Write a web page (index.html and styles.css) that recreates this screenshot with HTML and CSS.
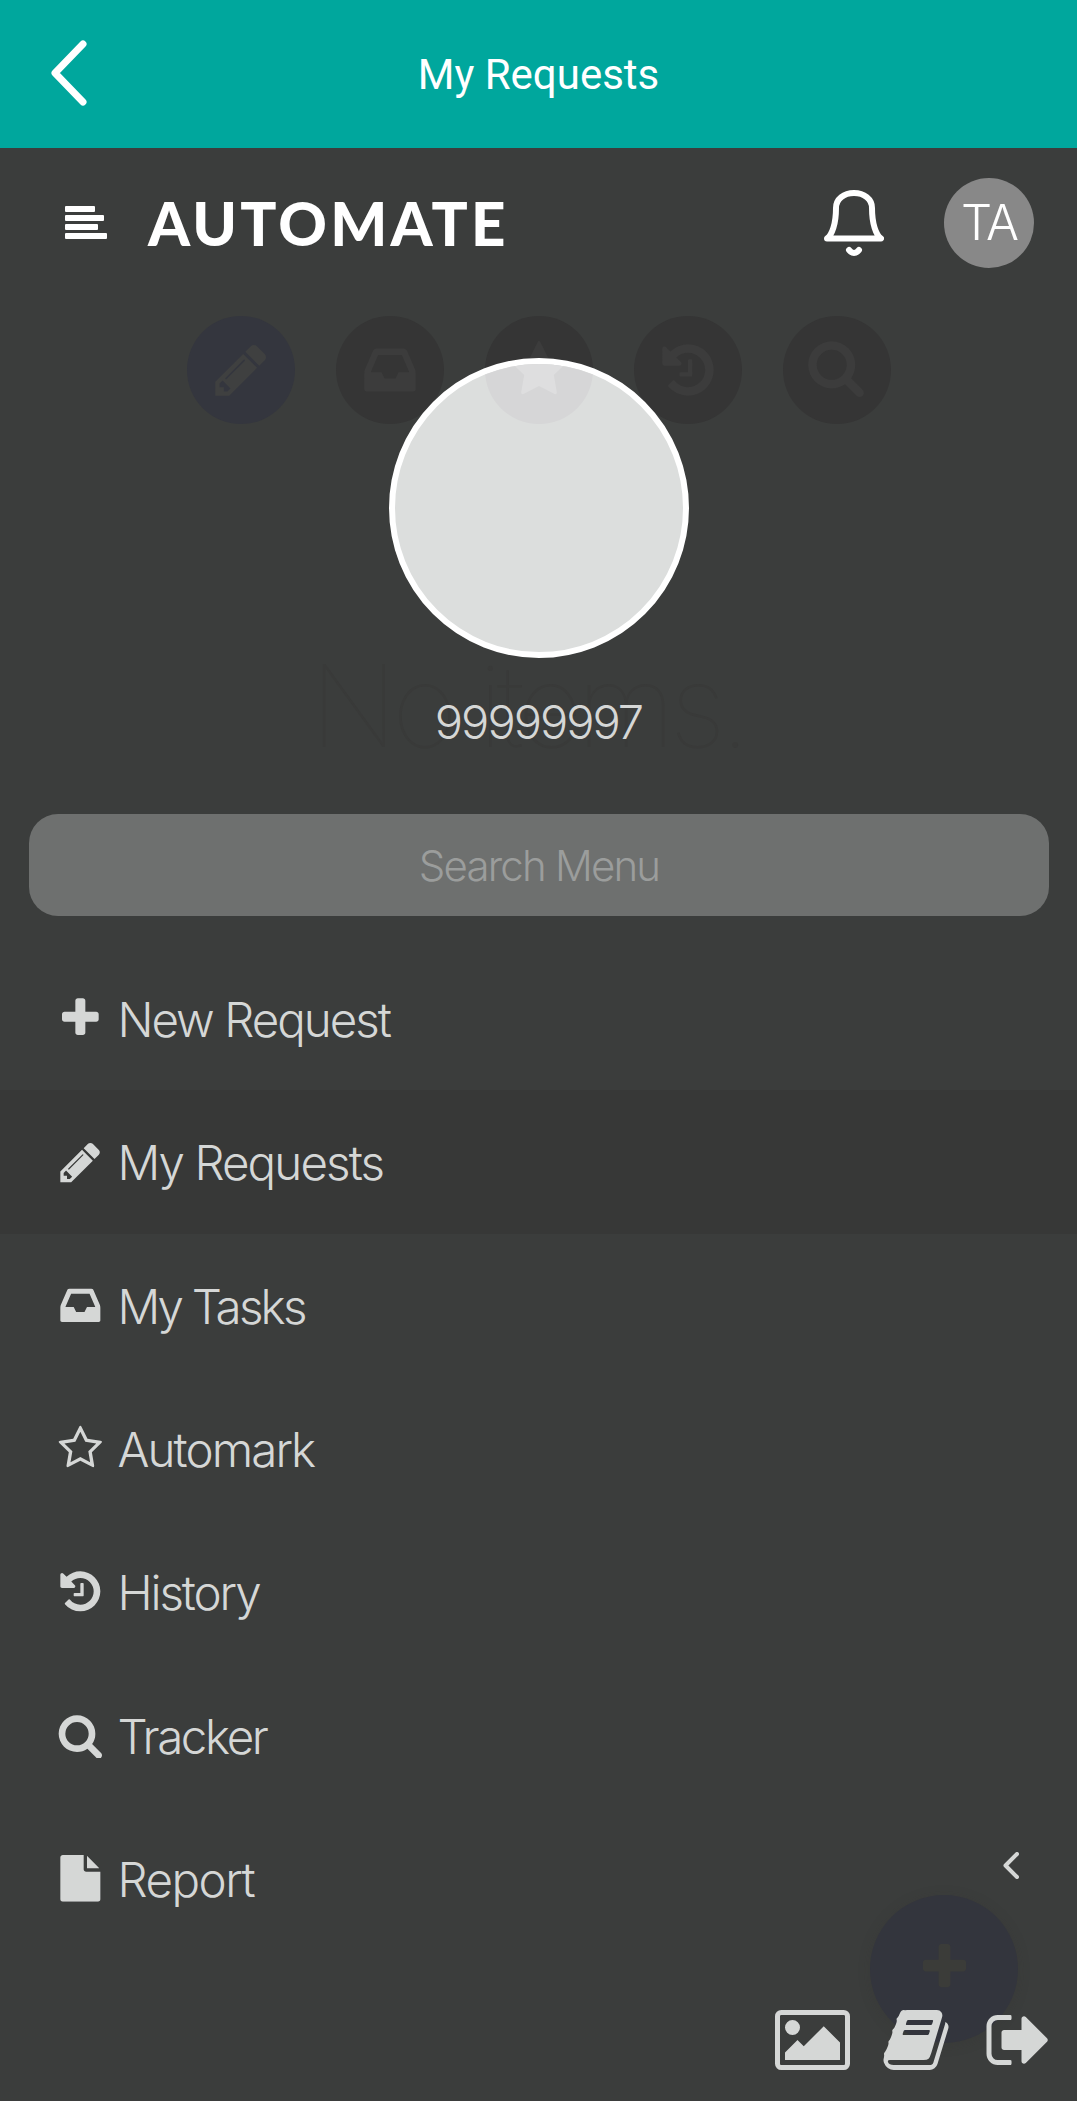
FILE: index.html
```html
<!DOCTYPE html>
<html lang="en">
<head>
<meta charset="utf-8">
<title>My Requests</title>
<link rel="stylesheet" href="styles.css">
</head>
<body>
<svg class="defs" aria-hidden="true">
  <symbol id="plus" viewBox="0 0 1792 1792"><path d="M1600 736v192q0 40-28 68t-68 28h-416v416q0 40-28 68t-68 28h-192q-40 0-68-28t-28-68v-416h-416q-40 0-68-28t-28-68v-192q0-40 28-68t68-28h416v-416q0-40 28-68t68-28h192q40 0 68 28t28 68v416h416q40 0 68 28t28 68z"/></symbol>
  <symbol id="pencil" viewBox="0 0 1792 1792"><path d="M491 1536l91-91-235-235-91 91v107h128v128h107zm523-928q0-22-22-22-10 0-17 7l-542 542q-7 7-7 17 0 22 22 22 10 0 17-7l542-542q7-7 7-17zm-54-192l416 416-832 832h-416v-416zm683 96q0 53-37 90l-166 166-416-416 166-165q36-38 90-38 53 0 91 38l235 234q37 39 37 91z"/></symbol>
  <symbol id="inbox" viewBox="0 0 1792 1792"><path d="M1151 960h316q-1-3-2.500-8t-2.500-8l-212-496h-708l-212 496q-1 2-2.500 8t-2.500 8h316l95 192h320zm513 30v482q0 26-19 45t-45 19h-1408q-26 0-45-19t-19-45v-482q0-62 25-123l238-552q10-25 36.500-42t52.500-17h832q26 0 52.500 17t36.500 42l238 552q25 61 25 123z"/></symbol>
  <symbol id="star" viewBox="0 0 1792 1792"><path d="M1728 647q0 22-26 48l-363 354 86 500q1 7 1 20 0 21-10.500 35.500t-30.500 14.500q-19 0-40-12l-449-236-449 236q-22 12-40 12-21 0-31.500-14.500t-10.500-35.500q0-6 2-20l86-500-364-354q-25-27-25-48 0-37 56-46l502-73 225-455q19-41 49-41t49 41l225 455 502 73q56 9 56 46z"/></symbol>
  <symbol id="star-o" viewBox="0 0 1792 1792"><path d="M1201 1004l306-297-422-62-189-382-189 382-422 62 306 297-73 421 378-199 377 199zm527-357q0 22-26 48l-363 354 86 500q1 7 1 20 0 50-41 50-19 0-40-12l-449-236-449 236q-22 12-40 12-21 0-31.500-14.500t-10.500-35.500q0-6 2-20l86-500-364-354q-25-27-25-48 0-37 56-46l502-73 225-455q19-41 49-41t49 41l225 455 502 73q56 9 56 46z"/></symbol>
  <symbol id="history" viewBox="0 0 1792 1792"><path d="M1664 896q0 156-61 298t-164 245-245 164-298 61q-172 0-327-72.500t-264-204.500q-7-10-6.500-22.500t8.500-20.500l137-138q10-9 25-9 16 2 23 12 73 95 179 147t225 52q104 0 198.500-40.500t163.500-109.500 109.500-163.500 40.500-198.500-40.500-198.500-109.500-163.500-163.500-109.500-198.500-40.500q-98 0-188 35.500t-160 101.500l137 138q31 30 14 69-17 40-59 40h-448q-26 0-45-19t-19-45v-448q0-42 40-59 39-17 69 14l130 129q107-101 244.500-156.500t284.500-55.500q156 0 298 61t245 164 164 245 61 298zm-640-288v448q0 14-9 23t-23 9h-320q-14 0-23-9t-9-23v-64q0-14 9-23t23-9h224v-352q0-14 9-23t23-9h64q14 0 23 9t9 23z"/></symbol>
  <symbol id="search" viewBox="0 0 1792 1792"><path d="M1216 832q0-185-131.500-316.500t-316.500-131.500-316.500 131.500-131.500 316.500 131.500 316.500 316.500 131.500 316.500-131.500 131.500-316.500zm512 832q0 52-38 90t-90 38q-54 0-90-38l-343-342q-179 124-399 124-143 0-273.500-55.500t-225-150-150-225-55.500-273.500 55.500-273.500 150-225 225-150 273.500-55.500 273.500 55.500 225 150 150 225 55.500 273.500q0 220-124 399l343 343q37 37 37 90z"/></symbol>
  <symbol id="file" viewBox="0 0 1792 1792"><path d="M1152 512v-472q22 14 36 28l408 408q14 14 28 36h-472zm-128 32q0 40 28 68t68 28h544v1056q0 40-28 68t-68 28h-1344q-40 0-68-28t-28-68v-1600q0-40 28-68t68-28h800v544z"/></symbol>
  <symbol id="picture" viewBox="64 0 1920 1792"><path d="M704 576q0 80-56 136t-136 56-136-56-56-136 56-136 136-56 136 56 56 136zm1024 384v448h-1408v-192l320-320 160 160 512-512zm96-704h-1600q-13 0-22.500 9.500t-9.500 22.500v1216q0 13 9.500 22.500t22.500 9.500h1600q13 0 22.500-9.500t9.500-22.500v-1216q0-13-9.500-22.500t-22.500-9.500zm160 32v1216q0 66-47 113t-113 47h-1600q-66 0-113-47t-47-113v-1216q0-66 47-113t113-47h1600q66 0 113 47t47 113z"/></symbol>
  <symbol id="book" viewBox="0 0 1792 1792"><path d="M1703 478q40 57 18 129l-275 906q-19 64-76.500 107.500t-122.500 43.500h-923q-77 0-148.500-53.500t-99.500-131.500q-24-67-2-127 0-4 3-27t4-37q1-8-3-21.500t-3-19.500q2-11 8-21t16.500-23.500 16.500-23.500q23-38 45-91.500t30-91.500q3-10 .5-30t-.5-28q3-11 17-28t17-23q21-36 42-92t25-90q1-9-2.500-32t.5-28q4-13 22-30.500t22-22.500q19-26 42.500-84.500t27.500-96.500q1-8-3-25.500t-2-26.500q2-8 9-18t18-23 17-21q8-12 16.500-30.500t15-35 16-36 19.500-32 26.500-23.500 36-11.500 47.500 5.500l-1 3q38-9 51-9h761q74 0 114 56t18 130l-274 906q-36 119-71.500 153.500t-128.500 34.500h-869q-27 0-38 15-11 16-1 43 24 70 144 70h923q29 0 56-15.500t35-41.500l300-987q7-22 5-57 38 15 59 43zm-1064 2q-4 13 2 22.500t20 9.500h608q13 0 25.500-9.500t16.500-22.500l21-64q4-13-2-22.500t-20-9.500h-608q-13 0-25.500 9.500t-16.500 22.500zm-83 256q-4 13 2 22.500t20 9.500h608q13 0 25.500-9.500t16.500-22.500l21-64q4-13-2-22.500t-20-9.500h-608q-13 0-25.500 9.500t-16.500 22.500z"/></symbol>
  <symbol id="sign-out" viewBox="0 0 1792 1792"><path d="M704 1440q0 4 1 20t.5 26.500-3 23.500-10 19.500-20.500 6.500h-320q-119 0-203.500-84.500t-84.500-203.500v-704q0-119 84.500-203.500t203.500-84.500h320q13 0 22.500 9.500t9.500 22.500q0 4 1 20t.5 26.500-3 23.500-10 19.500-20.500 6.500h-320q-66 0-113 47t-47 113v704q0 66 47 113t113 47h312l11.500 1 11.500 3 8 5.500 7 9 2 13.500zm928-544q0 26-19 45l-544 544q-19 19-45 19t-45-19-19-45v-288h-448q-26 0-45-19t-19-45v-384q0-26 19-45t45-19h448v-288q0-26 19-45t45-19 45 19l544 544q19 19 19 45z"/></symbol>
</svg>

<header class="titlebar">
  <svg class="back" viewBox="0 0 36 66"><path d="M32 4L4 33L32 62"/></svg>
  <h1 class="title">My Requests</h1>
</header>

<main class="screen">
  <div class="backdrop">
    <div class="tabs">
      <span class="tab tab-on"><svg><use href="#pencil"/></svg></span>
      <span class="tab"><svg><use href="#inbox"/></svg></span>
      <span class="tab"><svg><use href="#star"/></svg></span>
      <span class="tab"><svg><use href="#history"/></svg></span>
      <span class="tab"><svg><use href="#search"/></svg></span>
    </div>
    <p class="empty">No items.</p>
    <span class="fab"><svg><use href="#plus"/></svg></span>
  </div>

  <div class="drawer">
    <div class="brandbar">
      <svg class="burger" viewBox="0 0 42 33"><rect width="30" height="6" rx="1"/><rect y="9" width="39" height="6" rx="1"/><rect y="18" width="33" height="6" rx="1"/><rect y="27" width="42" height="6" rx="1"/></svg>
      <span class="brand">AUTOMATE</span>
      <svg class="bell" viewBox="0 0 60 66"><path d="M3 48.500C8 45 12 34 12 18C12 9 20 3 30 3C40 3 48 9 48 18C48 34 52 45 57 48.500Z"/><path d="M25 60q5 6 10 0"/></svg>
      <span class="initials">TA</span>
    </div>

    <div class="profile">
      <div class="photo"><span class="photo-tab"><svg><use href="#star"/></svg></span></div>
      <p class="user">99999997</p>
    </div>

    <div class="searchbox"><span class="hint">Search Menu</span></div>

    <nav class="menu">
      <a class="item"><svg class="icon"><use href="#plus"/></svg><span class="label new">New Request</span></a>
      <a class="item active"><svg class="icon"><use href="#pencil"/></svg><span class="label requests">My Requests</span></a>
      <a class="item"><svg class="icon"><use href="#inbox"/></svg><span class="label tasks">My Tasks</span></a>
      <a class="item"><svg class="icon"><use href="#star-o"/></svg><span class="label automark">Automark</span></a>
      <a class="item"><svg class="icon"><use href="#history"/></svg><span class="label history">History</span></a>
      <a class="item"><svg class="icon"><use href="#search"/></svg><span class="label tracker">Tracker</span></a>
      <a class="item"><svg class="icon"><use href="#file"/></svg><span class="label report">Report</span><svg class="more" viewBox="0 0 16 27"><path d="M14 2L2.500 13.500L14 25"/></svg></a>
    </nav>

    <footer class="tools">
      <svg class="tool wide"><use href="#picture"/></svg>
      <svg class="tool"><use href="#book"/></svg>
      <svg class="tool"><use href="#sign-out"/></svg>
    </footer>
  </div>
</main>
</body>
</html>
```
FILE: styles.css
```css
* { box-sizing: border-box; }
body {
  margin: 0;
  width: 1077px;
  height: 2101px;
  overflow: hidden;
  background: #3b3d3c;
  color: #d5d7d6;
  font-family: Inter, "Liberation Sans", sans-serif;
  font-weight: 300;
}
h1, p { margin: 0; font-weight: inherit; }
svg { display: block; fill: currentColor; flex: none; }
.defs { position: absolute; width: 0; height: 0; }

.titlebar {
  display: grid;
  grid-template-columns: 86px 1fr 86px;
  align-items: center;
  height: 148px;
  background: #00a79d;
  color: #fff;
}
.back { width: 36px; height: 66px; margin: -3px 0 0 51px; fill: none; stroke: #fff; stroke-width: 7; stroke-linecap: round; stroke-linejoin: round; }
.title { padding-top: 2px; text-align: center; font: 400 42px/50px Roboto, sans-serif; }

.screen { position: relative; height: 1953px; }
.backdrop { position: absolute; inset: 0; }
.tabs { display: flex; justify-content: center; gap: 41px; padding: 168px 0 0 1px; }
.tab, .photo-tab { display: flex; align-items: center; justify-content: center; width: 108px; height: 108px; border-radius: 50%; background: #353535; color: #3c3c3c; }
.tab-on { background: #34363e; color: #3f4040; }
.tab svg, .photo-tab svg { width: 60px; height: 60px; }
.tab:last-child svg { margin: -6px 0 0 -3px; }
.empty { position: absolute; left: 310px; top: 488px; font-size: 114px; line-height: 140px; font-weight: 100; letter-spacing: -6px; color: #393a39; white-space: nowrap; }
.fab { position: absolute; left: 870px; top: 1747px; display: flex; align-items: center; justify-content: center; width: 148px; height: 148px; border-radius: 50%; background: #33353d; color: #3b3c39; box-shadow: 0 2px 12px rgba(50, 52, 48, .25); }
.fab svg { width: 55px; height: 55px; margin-bottom: 4px; }

.drawer { position: relative; display: flex; flex-direction: column; height: 100%; }
.brandbar { display: flex; align-items: center; height: 150px; padding: 0 43px 0 65px; color: #fff; }
.burger { width: 42px; height: 33px; margin-top: -2px; }
.brand { margin-left: 41px; font: 900 60px/72px Lato, sans-serif; letter-spacing: 3.200px; }
.bell { width: 60px; height: 66px; margin-left: auto; fill: none; stroke: #fff; stroke-width: 6; stroke-linecap: round; stroke-linejoin: round; }
.initials { width: 90px; height: 90px; margin-left: 60px; border-radius: 50%; background: #888; text-align: center; font-size: 49px; line-height: 90px; letter-spacing: -2px; }

.profile { display: flex; flex-direction: column; align-items: center; margin-top: 60px; }
.photo { position: relative; width: 300px; height: 300px; border: 6px solid #fff; border-radius: 50%; background: #dcdedd; overflow: hidden; }
.photo-tab { position: absolute; left: 90px; top: -48px; background: #d6d6d7; color: #dededf; }
.user { margin-top: 34px; font-size: 47px; line-height: 60px; letter-spacing: -2px; }

.searchbox { display: flex; align-items: center; justify-content: center; height: 102px; margin: 62px 28px 0 29px; border-radius: 29px; background: #6e706f; }
.hint { padding-top: 2px; font-size: 42px; line-height: 50px; letter-spacing: -1.800px; color: #9b9d9c; }

.menu { margin-top: 31px; }
.item { display: flex; align-items: center; height: 143.300px; padding-left: 56.700px; }
.active { background: #373837; }
.icon { width: 46.700px; height: 46.700px; }
.label { margin: 3px 0 0 14px; font-size: 47.500px; line-height: 60px; white-space: nowrap; }
.new { letter-spacing: -2px; }
.requests { letter-spacing: -1.900px; }
.tasks { letter-spacing: -2.800px; }
.automark { letter-spacing: -1.900px; }
.history { letter-spacing: -2.100px; }
.tracker { letter-spacing: -2.400px; }
.report { letter-spacing: -1.500px; }
.more { width: 16px; height: 27px; margin: -26px 58px 0 auto; fill: none; stroke: currentColor; stroke-width: 4; stroke-linecap: round; stroke-linejoin: round; }

.tools { display: flex; padding: 54.500px 0 0 775px; }
.tool { width: 70px; height: 70px; }
.wide { width: 75px; margin-right: 30.500px; }
.tool:last-child { margin-left: 33px; }
```
